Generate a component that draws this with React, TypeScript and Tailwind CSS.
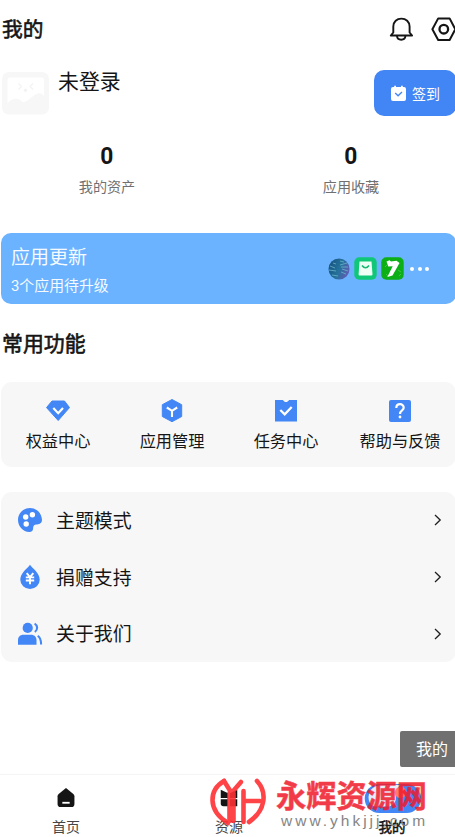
import React from "react";

const DiamondIcon = () => (
  <svg width="24" height="22" viewBox="0 0 24 22">
    <path d="M6 1H18.5L23.5 7.6 12.2 20.5 .5 7.6Z" fill="#4386f5" stroke="#4386f5" strokeLinejoin="round" />
    <path d="M7.3 8 12.2 13.2 17 8" fill="none" stroke="#fff" strokeWidth="2.2" />
  </svg>
);

const CubeIcon = () => (
  <svg width="24" height="24" viewBox="0 0 24 24">
    <path d="M12 .5 21.7 5.7V17.5L12 22.7 2.3 17.5V5.7Z" fill="#4386f5" stroke="#4386f5" strokeLinejoin="round" />
    <path d="M6.8 8.5 12 11.8 17.2 8.5M12 11.5V18" fill="none" stroke="#fff" strokeWidth="2.1" />
  </svg>
);

const TaskIcon = () => (
  <svg width="24" height="24" viewBox="0 0 24 24">
    <path d="M1 1H8.3C9.7 1 9.6 3 12 3S14.3 1 15.7 1H23V22.6H1Z" fill="#4386f5" />
    <path d="M6.3 11 10.7 15.3 17.7 8" fill="none" stroke="#fff" strokeWidth="2.3" />
  </svg>
);

const HelpIcon = () => (
  <svg width="24" height="24" viewBox="0 0 24 24">
    <rect x="1" y="1" width="22" height="22" rx="2" fill="#4386f5" />
    <path d="M8.3 9C8.3 4 15.7 4 15.7 8.7 15.7 11.5 12 11.3 12 15" fill="none" stroke="#fff" strokeWidth="2.2" />
    <circle cx="12" cy="18" r="1.4" fill="#fff" />
  </svg>
);

const PaletteIcon = () => (
  <svg width="26" height="26" viewBox="0 0 26 26">
    <path
      d="M13 1C6.2 1 1 6.3 1 12.8 1 19.5 6 25 12.3 25 14.9 25 16 23.5 16.1 21.4 16.3 18.7 17 17.7 20 17.5 23.5 17.2 25 15.5 25 12.7 24.5 6 19.7 1 13 1Z"
      fill="#4386f5"
    />
    <circle cx="8.7" cy="10" r="2.7" fill="#fff" />
    <circle cx="15.4" cy="7.7" r="2.7" fill="#fff" />
    <circle cx="9.2" cy="17" r="2.7" fill="#fff" />
  </svg>
);

const DonateIcon = () => (
  <svg width="26" height="26" viewBox="0 0 26 26">
    <path d="M13 .8C15.5 4.5 22.7 9 22.7 15.8A9.7 9.2 0 0 1 3.3 15.8C3.3 9 10.5 4.5 13 .8Z" fill="#4386f5" />
    <path d="M9.7 9.2 13 13.2 16.3 9.2M8.8 13.4H17.2M8.8 16.5H17.2M13 13V20.2" fill="none" stroke="#fff" strokeWidth="1.9" />
  </svg>
);

const PeopleIcon = () => (
  <svg width="26" height="26" viewBox="0 0 26 26">
    <circle cx="10.7" cy="6.9" r="5.1" fill="#4386f5" />
    <path d="M1 23.7V19.2C1 15.8 3.1 13.7 6.5 13.7H14C17.2 13.7 19.5 15.8 19.5 19.2V23.7Z" fill="#4386f5" />
    <path d="M17.6 2.6C20.9 4.5 20.9 8.6 17.9 11M20.7 14.9C23.2 16.3 24.1 18.5 24.1 23.5" fill="none" stroke="#4386f5" strokeWidth="2.1" />
  </svg>
);

const shortcuts = [
  { icon: <DiamondIcon />, label: "权益中心" },
  { icon: <CubeIcon />, label: "应用管理" },
  { icon: <TaskIcon />, label: "任务中心" },
  { icon: <HelpIcon />, label: "帮助与反馈" },
];

const menuItems = [
  { icon: <PaletteIcon />, label: "主题模式" },
  { icon: <DonateIcon />, label: "捐赠支持" },
  { icon: <PeopleIcon />, label: "关于我们" },
];

const stats = [
  { value: "0", label: "我的资产" },
  { value: "0", label: "应用收藏" },
];

const Header = () => (
  <header className="flex h-14 shrink-0 items-center justify-between pl-0.5">
    <h1 className="pt-[3px] text-[20.7px] leading-8 [-webkit-text-stroke:0.6px_#151515]">我的</h1>
    <div className="-mr-px flex gap-4 pt-0.5">
      <svg width="26" height="26" viewBox="0 0 26 26" fill="none" stroke="#151515" strokeWidth="1.9">
        <path d="M2.8 19.5H24.1L21.6 16.5V10.6C21.6 5.6 17.9 2.6 13.4 2.6S5.3 5.6 5.3 10.6V16.5Z" strokeLinejoin="round" />
        <path d="M9 20C9.3 24.9 17.1 24.9 17.4 20" />
      </svg>
      <svg width="26" height="26" viewBox="0 0 26 26" fill="none" stroke="#151515" strokeWidth="2">
        <path d="M8.2 2.4H19.6L25.3 13.2 19.6 24H8.2L2.4 13.2Z" strokeLinejoin="round" />
        <circle cx="13.8" cy="13.2" r="4.3" strokeWidth="2.3" />
      </svg>
    </div>
  </header>
);

const Profile = () => (
  <section className="flex h-[74px] shrink-0 items-start pt-3.5 pl-0.5">
    <svg className="mt-0.5" width="47" height="43" viewBox="0 0 47 43">
      <rect width="47" height="42.5" rx="7" fill="#f7f7f7" />
      <path d="M5.5 31.5V8Q5.5 5.5 8 5.5H39.5Q42 5.5 42 8V24C38 19 34 22 30 25 26 28 24 30 20.5 30 16 25 9 26 5.5 31.5Z" fill="#fff" />
      <path d="M16.5 11.5 19.5 14.5 16.5 17.5M31 11.5 28 14.5 31 17.5" fill="none" stroke="#f3f3f3" strokeWidth="1.2" />
      <circle cx="23.5" cy="18.3" r="1.8" fill="#f3f3f3" />
    </svg>
    <div className="ml-[9px] -mt-[3px] text-[20.9px] leading-[30px]">未登录</div>
    <button className="-mr-px ml-auto flex h-[46px] w-[82px] items-center rounded-[10px] bg-[#4285f4] pl-4 text-white">
      <svg width="17" height="17" viewBox="0 0 17 17">
        <path d="M3 2H4.2V.7H6V2H11V.7H12.8V2H14Q16 2 16 4V14Q16 16 14 16H3Q1 16 1 14V4Q1 2 3 2Z" fill="#fff" />
        <path d="M5.2 8 8.1 10.8 12 7" fill="none" stroke="#4285f4" strokeWidth="1.3" />
      </svg>
      <span className="mt-0.5 ml-[5px] text-[14px]">签到</span>
    </button>
  </section>
);

const Stats = () => (
  <section className="flex h-[103px] shrink-0 gap-[30px] pt-3">
    {stats.map((stat) => (
      <div key={stat.label} className="flex w-[214px] shrink-0 flex-col items-center">
        <span className="scale-x-95 font-['Roboto'] text-[24px] font-bold leading-7">{stat.value}</span>
        <span className="mt-[7px] text-[14.1px] leading-5 text-[#707070]">{stat.label}</span>
      </div>
    ))}
  </section>
);

const UpdateBanner = () => (
  <section className="-mr-px ml-px flex h-[71px] shrink-0 items-center rounded-[10px] bg-[#6bb2ff] pl-2.5 text-[#f5faff]">
    <div className="pt-1">
      <div className="text-[19px] leading-7">应用更新</div>
      <div className="mt-0.5 text-[14.9px] leading-6">3个应用待升级</div>
    </div>
    <div className="ml-auto mr-[27px] flex items-center gap-1">
      <svg width="22" height="22" viewBox="0 0 22 22">
        <defs>
          <linearGradient id="globe" x2="1" y2=".4">
            <stop stopColor="#174c79" />
            <stop offset=".6" stopColor="#23729b" />
            <stop offset="1" stopColor="#5960b0" />
          </linearGradient>
        </defs>
        <circle cx="11" cy="11" r="10.5" fill="url(#globe)" />
        <path d="M2 8 7 10M1 12 8 13M4 17 10 18M5 5 8 6M12 7 19 5M13 9 20 9M14 11 20 13M13 14 18 16M12 3 16 4" stroke="#73bed0" strokeWidth=".7" />
      </svg>
      <svg width="23" height="23" viewBox="0 0 23 23">
        <rect x=".3" y=".3" width="22.4" height="22.4" rx="5" fill="#10c777" />
        <path d="M5.5 4.5H17.5L18.5 17.3Q18.4 18.5 17.5 18.5H5.5Q4.5 18.5 4.6 17.3Z" fill="#effff6" />
        <path d="M8 8.5Q11.5 13 15 8.5" fill="none" stroke="#12b96e" strokeWidth="1.6" />
      </svg>
      <svg width="23" height="23" viewBox="0 0 23 23">
        <rect x=".3" y=".3" width="22.4" height="22.4" rx="5" fill="#0daf17" />
        <path d="M4 10 6 8M5 17 7 19M17 13 20 15M18 19 20 17" stroke="#49cf4d" strokeWidth=".8" />
        <path d="M5.5 4.4 8.5 3.2 10 4.5 15.5 3.7 18.5 6 11.5 18.5 6.3 20 11.7 9.2 7.3 9.5Z" fill="#fff" />
      </svg>
      <div className="ml-0.5 flex gap-[3.5px]">
        <i className="size-1 rounded-full bg-white" />
        <i className="size-1 rounded-full bg-white" />
        <i className="size-1 rounded-full bg-white" />
      </div>
    </div>
  </section>
);

const BottomNav = () => (
  <nav className="-ml-4 mt-auto flex h-[63px] w-[489px] shrink-0 border-t border-[#f5f5f5] text-[14px] text-[#454545]">
    <div className="flex w-[163px] flex-col items-center pt-[11px] pl-px">
      <svg width="24" height="24" viewBox="0 0 24 24">
        <path d="M12 2.3 20 8.8Q21.2 9.8 21.2 11.2V19.6Q21.2 23 18 23H6Q2.8 23 2.8 19.6V11.2Q2.8 9.8 4 8.8Z" fill="#151515" />
        <path d="M8 18.3H16" stroke="#fff" strokeWidth="2" />
      </svg>
      <span className="mt-[9px] leading-5">首页</span>
    </div>
    <div className="flex w-[163px] flex-col items-center pt-[11px] pl-px">
      <svg width="24" height="24" viewBox="0 0 24 24" fill="#151515">
        <path d="M3 4 11 8V13H3ZM21 4 13 8V13H21ZM3 14.5H11V22H6Q3 22 3 19ZM13 14.5H21V22H13Z" />
      </svg>
      <span className="mt-[9px] leading-5">资源</span>
    </div>
    <div className="flex w-[163px] flex-col items-center pt-2 pl-px">
      <svg width="62" height="34" viewBox="0 0 62 34">
        <rect x="2" y="1" width="60" height="31" rx="15.5" fill="#4386f5" />
        <path d="M6 15Q7 2 22 2H40Q34 7 35 15T28 25H12Q6 23 6 15Z" fill="#e6eeff" />
        <circle cx="40" cy="10" r="6" fill="#ff7a70" />
      </svg>
      <span className="mt-0.5 text-[13.5px] leading-5 text-[#151515] [-webkit-text-stroke:0.5px_#151515]">我的</span>
    </div>
  </nav>
);

const Watermark = () => (
  <div className="pointer-events-none absolute top-[777px] left-[209px] flex">
    <svg width="58" height="50" viewBox="0 0 58 50" fill="none" stroke="#ff3034" strokeWidth="4.6" strokeLinecap="round" opacity=".9">
      <path d="M15 4C0 13-2 33 19 46" />
      <path d="M15 4 22.5 16 32 5M20.5 16V44M24.5 16V44" />
      <path d="M48 4C59 16 56 34 40 45" />
      <path d="M34.5 14V45M35 24H51" />
    </svg>
    <div className="ml-[9px] whitespace-nowrap">
      <div className="mt-0.5 text-[30.2px] font-bold leading-9 text-[#f01a2a] opacity-85 [-webkit-text-stroke:0.5px_#f01a2a]">永辉资源网</div>
      <div className="-mt-[3px] ml-[5px] font-['Liberation_Sans'] text-[15.5px] leading-[18px] tracking-[3px] text-[#858585]">www.yhkjjj.com</div>
    </div>
  </div>
);

const App = () => {
  return (
    <main className="relative flex h-[837px] w-[455px] flex-col overflow-hidden bg-white font-['Roboto','Noto_Sans_CJK_SC',sans-serif] text-[#151515]">
      <Header />
      <Profile />
      <Stats />
      <UpdateBanner />

      <h2 className="mt-6 shrink-0 pl-0.5 text-[20.9px] leading-8 [-webkit-text-stroke:0.6px_#151515]">常用功能</h2>

      <section className="-mr-px mt-[22px] ml-px flex h-[85px] shrink-0 rounded-[11px] bg-[#f7f7f7]">
        {shortcuts.map((item) => (
          <div key={item.label} className="flex w-[114px] shrink-0 flex-col items-center pt-[17px]">
            <div className="flex h-6 items-center">{item.icon}</div>
            <span className="mt-[7px] text-[16.2px] leading-6">{item.label}</span>
          </div>
        ))}
      </section>

      <section className="-mr-px mt-[25px] ml-px shrink-0 rounded-[11px] bg-[#f7f7f7]">
        {menuItems.map((item) => (
          <div key={item.label} className="flex h-[56.8px] items-center pl-4">
            {item.icon}
            <span className="ml-[13px] pt-[3px] text-[18.9px] leading-7">{item.label}</span>
            <svg className="mr-3 ml-auto" width="12" height="14" viewBox="0 0 12 14" fill="none" stroke="#202020" strokeWidth="1.3">
              <path d="M3 2 8.2 7 3 12" />
            </svg>
          </div>
        ))}
      </section>

      <BottomNav />
      <Watermark />
      <div className="absolute top-[731px] left-[400px] flex h-9 w-[55px] items-center rounded-l-[2px] bg-[#707070] pt-0.5 pl-4 text-[16px] text-white">我的</div>
    </main>
  );
};

export default App;
